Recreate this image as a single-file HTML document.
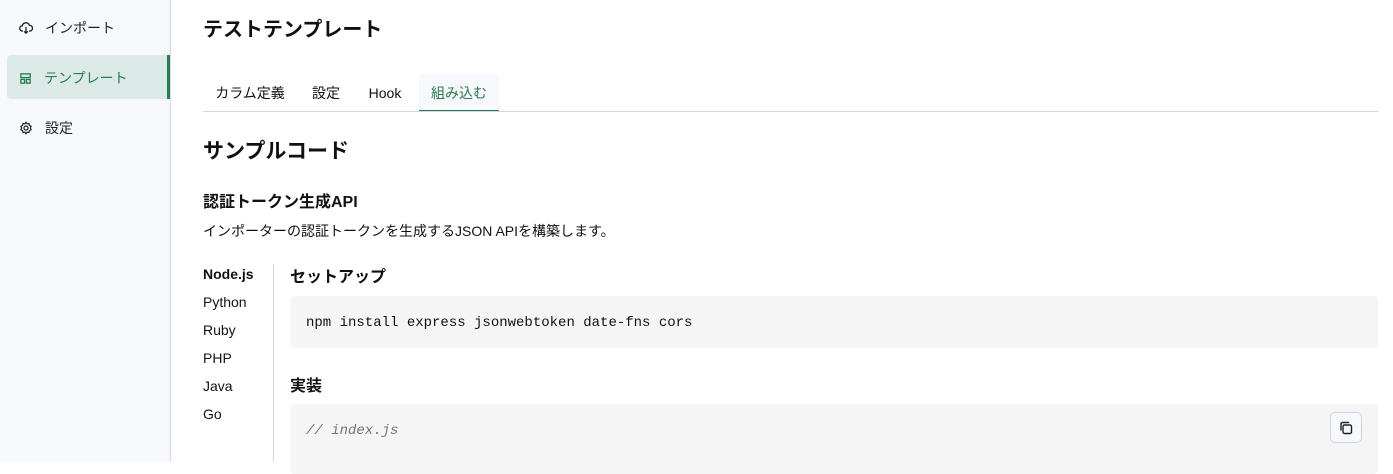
<!DOCTYPE html>
<html><head><meta charset="utf-8"><style>
*{box-sizing:border-box;margin:0;padding:0}
body{width:1393px;height:462px;overflow:hidden;background:#fff;font-family:"Liberation Sans","Noto Sans CJK JP",sans-serif;color:#111;position:relative}
.side{position:absolute;left:0;top:0;width:171px;height:462px;background:#f6f8fb;border-right:1px solid #d5d8e3}
.item{position:absolute;left:7px;width:163px;height:44px;display:flex;align-items:center;padding-left:12px;font-size:14px;color:#222;padding-top:2px}
.item svg{margin-right:12px}
.active{background:#dbeae6;color:#2a7a52;border-radius:4px 0 0 4px;border-right:3px solid #2a7a52}
.abs{position:absolute;white-space:nowrap}
.tab{position:absolute;top:74px;height:37px;font-size:14px;line-height:39px;text-align:center}
.code{position:absolute;left:290px;width:1088px;background:#f5f5f5;border-radius:4px;font-family:"Liberation Mono",monospace;font-size:14px}
</style></head><body>
<div class="side">
<div class="item" style="top:5px"><svg width="14" height="14" viewBox="0 0 16 16" fill="none" stroke="#222" stroke-width="1.5"><path d="M4.5 11.5H4a3 3 0 0 1-.3-6A4.3 4.3 0 0 1 12 5a3 3 0 0 1 .3 6.5H11.5"/><path d="M8 7v7M5.8 11.8L8 14l2.2-2.2"/></svg>インポート</div>
<div class="item active" style="top:55px"><svg width="13" height="13" viewBox="0 0 14 14" fill="none" stroke="#2a7a52" stroke-width="1.4"><rect x="2" y="2" width="10" height="4"/><rect x="2" y="8" width="4" height="4"/><rect x="8" y="8" width="4" height="4"/></svg>テンプレート</div>
<div class="item" style="top:105px"><svg width="14" height="14" viewBox="0 0 16 16" fill="none" stroke="#222" stroke-width="1.4"><circle cx="8" cy="8" r="2.3"/><path d="M8 1.5l1.3 1.7 2.1-.4.5 2.1 1.9 1L13 8l.8 2-1.9 1-.5 2.1-2.1-.4L8 14.5l-1.3-1.7-2.1.4-.5-2.1-1.9-1L3 8l-.8-2 1.9-1 .5-2.1 2.1.4z"/></svg>設定</div>
</div>
<div class="abs" style="left:203px;top:13px;font-size:20px;font-weight:bold">テストテンプレート</div>
<div style="position:absolute;left:203px;top:111px;width:1175px;height:1px;background:#d5d8e3"></div>
<div class="tab" style="left:203px;width:94px">カラム定義</div>
<div class="tab" style="left:303px;width:46px">設定</div>
<div class="tab" style="left:358px;width:54px">Hook</div>
<div class="tab" style="left:419px;width:80px;background:#f6f8fb;color:#2a7a52;border-radius:4px 4px 0 0;border-bottom:1px solid #2a7a52">組み込む</div>
<div class="abs" style="left:203px;top:135px;font-size:21px;font-weight:bold">サンプルコード</div>
<div class="abs" style="left:203px;top:188px;font-size:16px;font-weight:bold">認証トークン生成API</div>
<div class="abs" style="left:203px;top:221px;font-size:14px">インポーターの認証トークンを生成するJSON APIを構築します。</div>
<div style="position:absolute;left:273px;top:264px;width:1px;height:198px;background:#d5d8e3"></div>
<div class="abs" style="left:203px;top:266px;font-size:14px;font-weight:bold">Node.js</div>
<div class="abs" style="left:203px;top:294px;font-size:14px">Python</div>
<div class="abs" style="left:203px;top:322px;font-size:14px">Ruby</div>
<div class="abs" style="left:203px;top:350px;font-size:14px">PHP</div>
<div class="abs" style="left:203px;top:378px;font-size:14px">Java</div>
<div class="abs" style="left:203px;top:406px;font-size:14px">Go</div>
<div class="abs" style="left:290px;top:263px;font-size:16px;font-weight:bold">セットアップ</div>
<div class="code" style="top:296px;height:52px;padding:19px 16px">npm install express jsonwebtoken date-fns cors</div>
<div class="abs" style="left:290px;top:372px;font-size:16px;font-weight:bold">実装</div>
<div class="code" style="top:404px;height:70px;padding:19px 16px;color:#6a7a6a;font-style:italic">// index.js</div>
<div style="position:absolute;left:1330px;top:412px;width:32px;height:31px;border:1px solid #cfd3e3;border-radius:5px;background:#f6f8fb;display:flex;align-items:center;justify-content:center"><svg width="14" height="14" viewBox="0 0 14 14" fill="none" stroke="#222" stroke-width="1.4"><rect x="4" y="4" width="8.5" height="8.5" rx="1.5"/><path d="M2 9.5V3a1.5 1.5 0 0 1 1.5-1.5H10"/></svg></div>
</body></html>
